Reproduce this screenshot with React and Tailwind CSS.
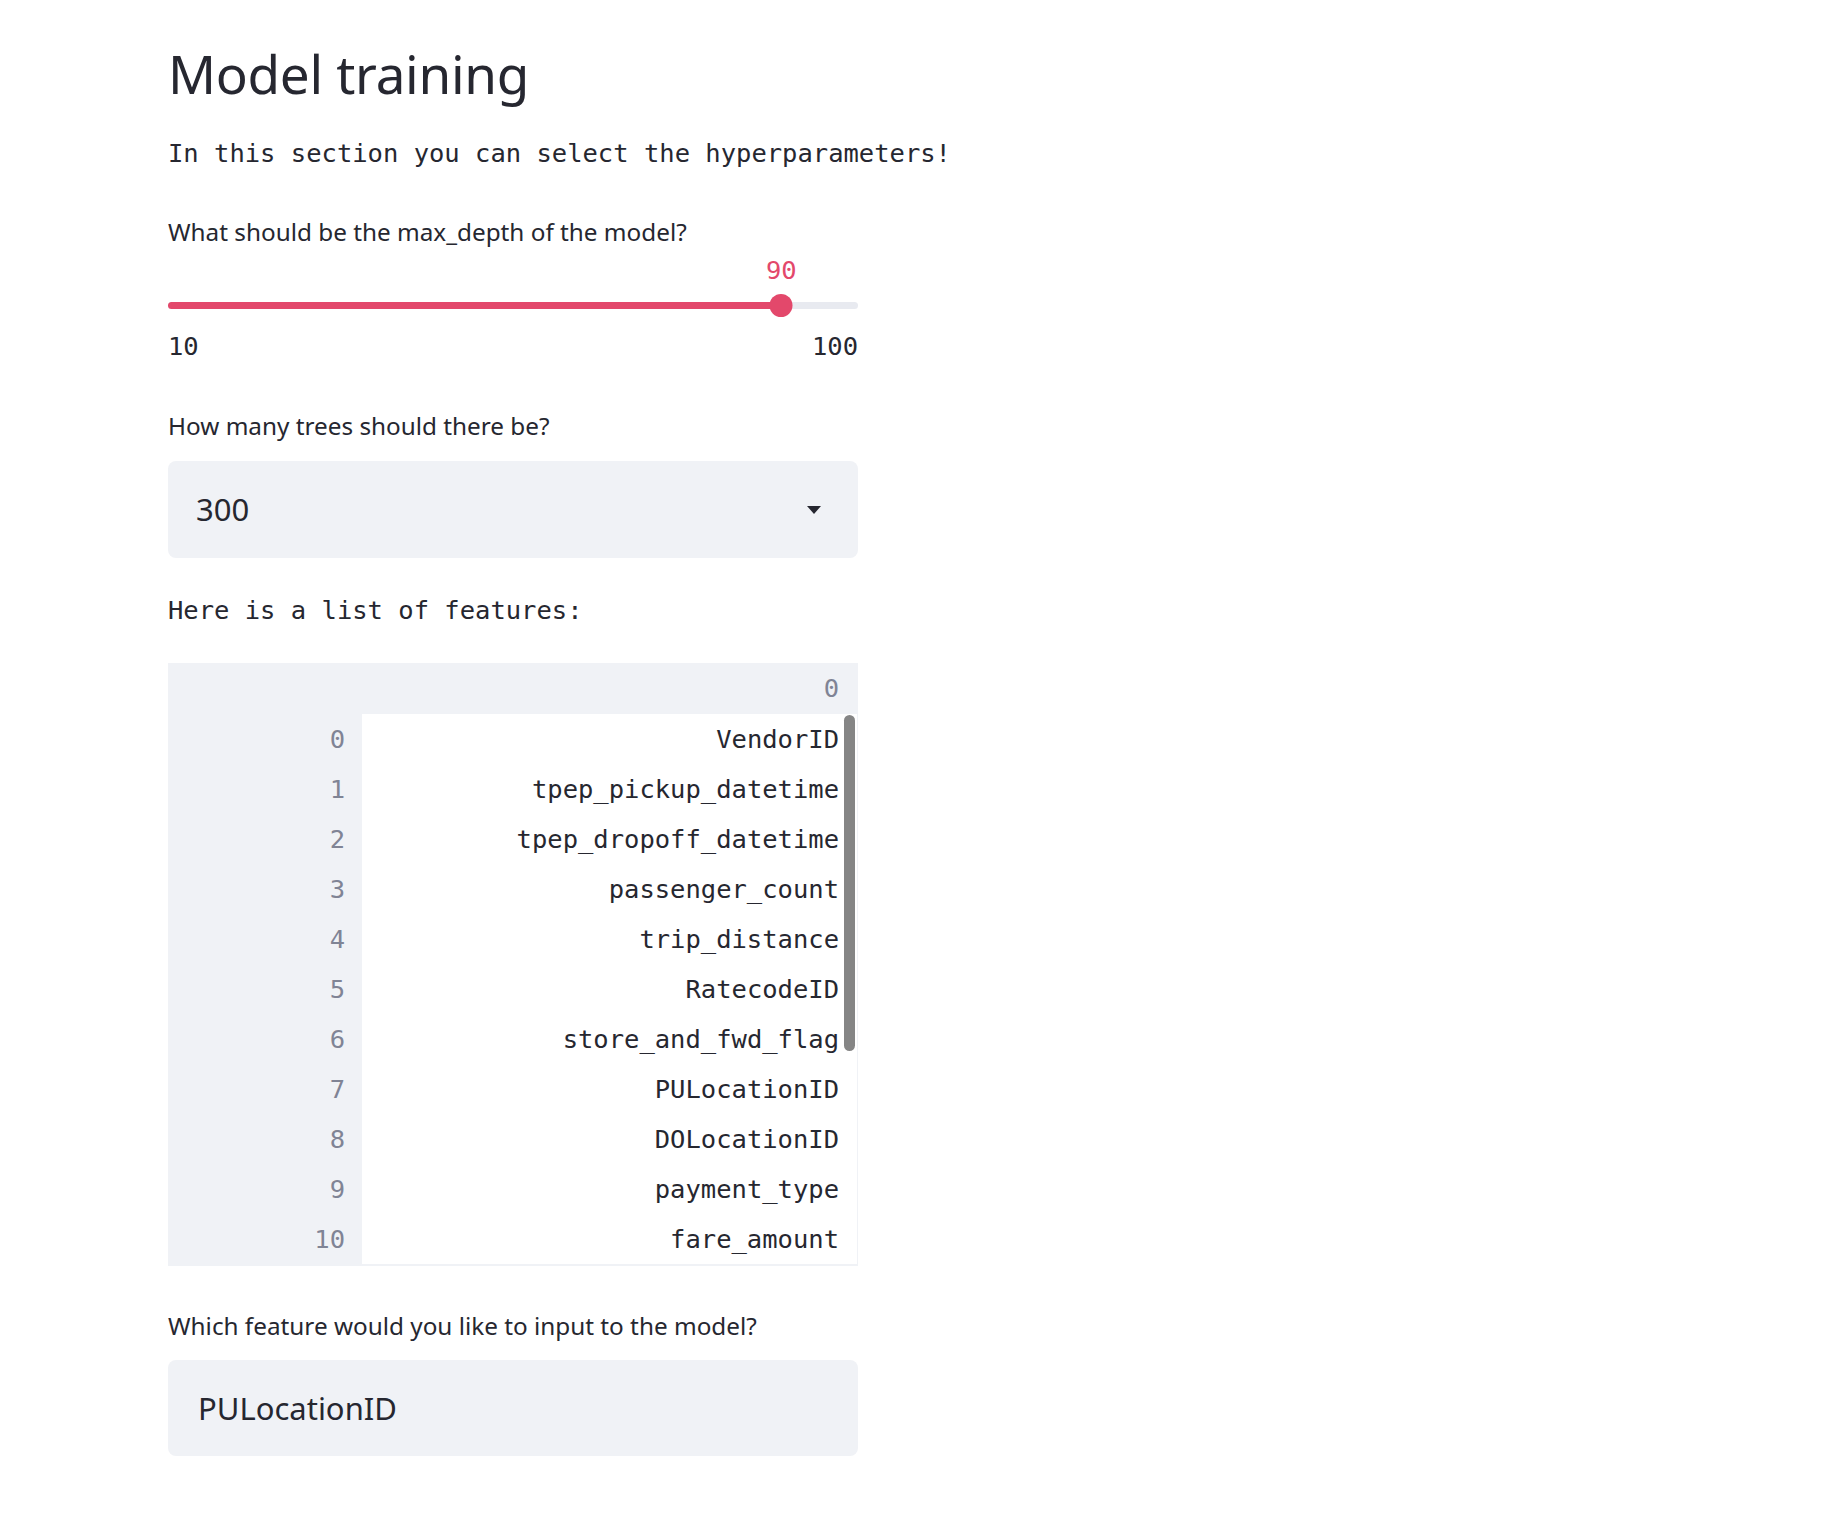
import { useState } from 'react';

const features = [
  'VendorID',
  'tpep_pickup_datetime',
  'tpep_dropoff_datetime',
  'passenger_count',
  'trip_distance',
  'RatecodeID',
  'store_and_fwd_flag',
  'PULocationID',
  'DOLocationID',
  'payment_type',
  'fare_amount',
];

const sans = "font-['Noto_Sans',sans-serif]";
const mono = "font-['DejaVu_Sans_Mono',monospace]";

function Slider({ min, max, value }) {
  const pct = ((value - min) / (max - min)) * 100;
  return (
    <div>
      {/* value bubble above the thumb */}
      <div className="relative h-[30px] mb-[9px]">
        <span
          className={`${mono} absolute top-0 -translate-x-1/2 text-[25.5px] leading-[30px] text-[#e3486b]`}
          style={{ left: `${pct}%` }}
        >
          {value}
        </span>
      </div>
      <div className="relative h-[23px] flex items-center">
        <div className="w-full h-[7px] rounded-full bg-[#e8eaf0]">
          <div className="h-full rounded-full bg-[#e3486b]" style={{ width: `${pct}%` }} />
        </div>
        <div
          className="absolute top-0 w-[23px] h-[23px] -translate-x-1/2 rounded-full bg-[#e3486b]"
          style={{ left: `${pct}%` }}
        />
      </div>
      <div className={`${mono} flex justify-between mt-[14px] text-[25.5px] leading-[30px]`}>
        <span>{min}</span>
        <span>{max}</span>
      </div>
    </div>
  );
}

export default function App() {
  const [trees] = useState('300');
  const [feature, setFeature] = useState('PULocationID');

  return (
    <div className="min-h-screen bg-white text-[#262730]">
      <div className="w-[690px] ml-[168px] pt-[39px] pb-[75px]">
        <h1 className={`${sans} text-[53px] leading-[70px] font-normal tracking-[-0.3px]`}>Model training</h1>

        <p className={`${mono} mt-[26px] text-[25.5px] leading-[36px] whitespace-nowrap`}>
          In this section you can select the hyperparameters!
        </p>

        <label className={`${sans} block mt-[45px] text-[24.3px] leading-[32px]`}>
          What should be the max_depth of the model?
        </label>
        <div className="mt-[7px]">
          <Slider min={10} max={100} value={90} />
        </div>

        <label className={`${sans} block mt-[49px] text-[24.3px] leading-[32px]`}>
          How many trees should there be?
        </label>
        <div className="mt-[19px] h-[97px] rounded-lg bg-[#f0f2f6] flex items-center justify-between pl-[28px] pr-[37px]">
          <span className={`${sans} text-[31px]`}>{trees}</span>
          <svg width="14" height="8" viewBox="0 0 14 8">
            <path d="M0 0 L14 0 L7 8 Z" fill="#262730" />
          </svg>
        </div>

        <p className={`${mono} mt-[34px] text-[25.5px] leading-[36px] whitespace-nowrap`}>Here is a list of features:</p>

        {/* dataframe */}
        <div className={`${mono} relative mt-[35px] bg-[#f0f2f6] pb-[2px] pr-[1px] text-[25.5px]`}>
          <div className="h-[51px] flex items-center justify-end pr-[18px] text-[#808495]">0</div>
          <div className="flex">
            <div className="w-[194px] shrink-0">
              {features.map((_, i) => (
                <div key={i} className="h-[50px] flex items-center justify-end pr-[17px] text-[#808495]">
                  {i}
                </div>
              ))}
            </div>
            <div className="flex-1 bg-white">
              {features.map((f) => (
                <div key={f} className="h-[50px] flex items-center justify-end pr-[18px]">
                  {f}
                </div>
              ))}
            </div>
          </div>
          {/* scrollbar thumb */}
          <div className="absolute right-[3px] top-[52px] w-[11px] h-[336px] rounded-full bg-[#858585]" />
        </div>

        <label className={`${sans} block mt-[44px] text-[24.3px] leading-[32px]`}>
          Which feature would you like to input to the model?
        </label>
        <input
          value={feature}
          onChange={(e) => setFeature(e.target.value)}
          className={`${sans} mt-[18px] block w-full h-[96px] rounded-lg bg-[#f0f2f6] pl-[30px] text-[31px] outline-none`}
        />
      </div>
    </div>
  );
}
